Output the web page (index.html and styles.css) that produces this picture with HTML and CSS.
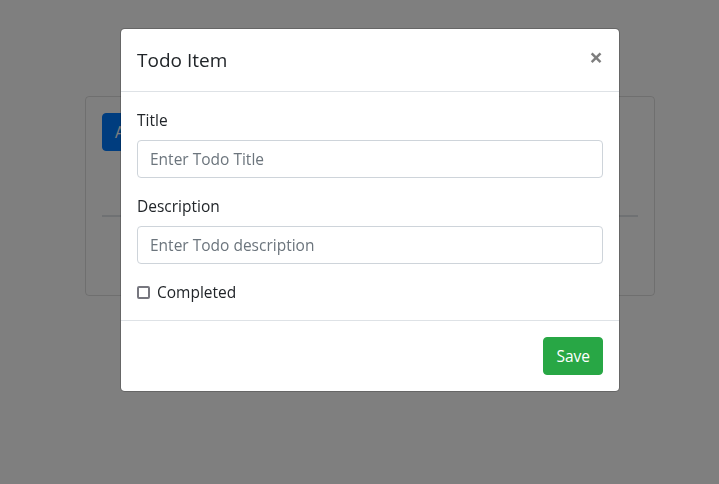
FILE: index.html
```html
<!DOCTYPE html>
<html lang="en">
<head>
<meta charset="utf-8">
<title>Todo</title>
<link rel="stylesheet" href="styles.css">
</head>
<body>
<div class="page">
  <div class="card">
    <button class="btn btn-primary" type="button">Add Todo</button>
    <table class="table">
      <thead>
        <tr><th>Title</th></tr>
      </thead>
      <tbody></tbody>
    </table>
  </div>
</div>

<div class="backdrop"></div>

<div class="modal">
  <div class="modal-dialog">
    <div class="modal-content">
      <div class="modal-header">
        <h5 class="modal-title">Todo Item</h5>
        <button class="close" type="button" aria-label="Close">×</button>
      </div>
      <div class="modal-body">
        <div class="form-group">
          <label class="label" for="title">Title</label>
          <input class="form-control" id="title" type="text" placeholder="Enter Todo Title">
        </div>
        <div class="form-group">
          <label class="label" for="desc">Description</label>
          <input class="form-control" id="desc" type="text" placeholder="Enter Todo description">
        </div>
        <div class="form-check">
          <input class="form-check-input" id="done" type="checkbox">
          <label class="form-check-label" for="done">Completed</label>
        </div>
      </div>
      <div class="modal-footer">
        <button class="btn btn-success" type="button">Save</button>
      </div>
    </div>
  </div>
</div>
</body>
</html>
```
FILE: styles.css
```css
* { box-sizing: border-box; }

body {
  margin: 0;
  font-family: "Open Sans", "Noto Sans", sans-serif;
  font-size: 15.5px;
  line-height: 24px;
  color: #212529;
  background: #fff;
}

.page {
  padding: 96px 0 0 85px;
}

.card {
  width: 570px;
  height: 200px;
  border: 1px solid rgba(0, 0, 0, 0.125);
  border-radius: 4px;
  padding: 16px;
}

.btn {
  display: inline-block;
  font-family: inherit;
  font-size: 15.5px;
  line-height: 24px;
  padding: 6px 12px;
  border: 1px solid transparent;
  border-radius: 4px;
  color: #fff;
  cursor: pointer;
}

.btn-primary {
  background: #007bff;
  border-color: #007bff;
}

.btn-success {
  background: #28a745;
  border-color: #28a745;
}

.table {
  width: 100%;
  margin-top: 16px;
  border-collapse: collapse;
  color: #212529;
}

.table th {
  text-align: left;
  padding: 12px 12px 12px 20px;
  font-weight: 700;
  border-bottom: 2px solid #dee2e6;
}

.backdrop {
  position: fixed;
  inset: 0;
  background: rgba(0, 0, 0, 0.5);
}

.modal {
  position: fixed;
  inset: 0;
}

.modal-dialog {
  width: 500px;
  margin: 28px 0 0 120px;
}

.modal-content {
  display: flex;
  flex-direction: column;
  background: #fff;
  background-clip: padding-box;
  border: 1px solid rgba(0, 0, 0, 0.2);
  border-radius: 4.8px;
}

.modal-header {
  display: flex;
  align-items: flex-start;
  justify-content: space-between;
  padding: 16px;
  border-bottom: 1px solid #dee2e6;
}

.modal-title {
  margin: 0;
  font-size: 19px;
  font-weight: 400;
  line-height: 30px;
  color: #212529;
}

.close {
  margin: -16px -16px -16px auto;
  padding: 16px;
  background: transparent;
  border: 0;
  font-family: "Open Sans", sans-serif;
  font-size: 24px;
  font-weight: 700;
  line-height: 24px;
  color: #000;
  opacity: 0.5;
  cursor: pointer;
}

.modal-body {
  padding: 16px;
}

.form-group {
  margin-bottom: 16px;
}

.label {
  display: block;
  margin-bottom: 8px;
}

.form-control {
  display: block;
  width: 100%;
  height: 38px;
  padding: 6px 12px;
  font-family: inherit;
  font-size: 15.5px;
  line-height: 24px;
  color: #495057;
  background: #fff;
  border: 1px solid #ced4da;
  border-radius: 4px;
}

.form-control::placeholder {
  color: #6c757d;
  opacity: 1;
}

.form-check {
  position: relative;
  display: block;
  padding-left: 20px;
}

.form-check-input {
  position: absolute;
  appearance: none;
  -webkit-appearance: none;
  margin: 6px 0 0 -20px;
  width: 13px;
  height: 13px;
  background: #fff;
  border: 2px solid #77777f;
  border-radius: 2px;
}

.form-check-label {
  margin: 0;
}

.modal-footer {
  display: flex;
  justify-content: flex-end;
  align-items: center;
  padding: 12px;
  border-top: 1px solid #dee2e6;
}

.modal-footer .btn {
  margin: 4px;
}
```
